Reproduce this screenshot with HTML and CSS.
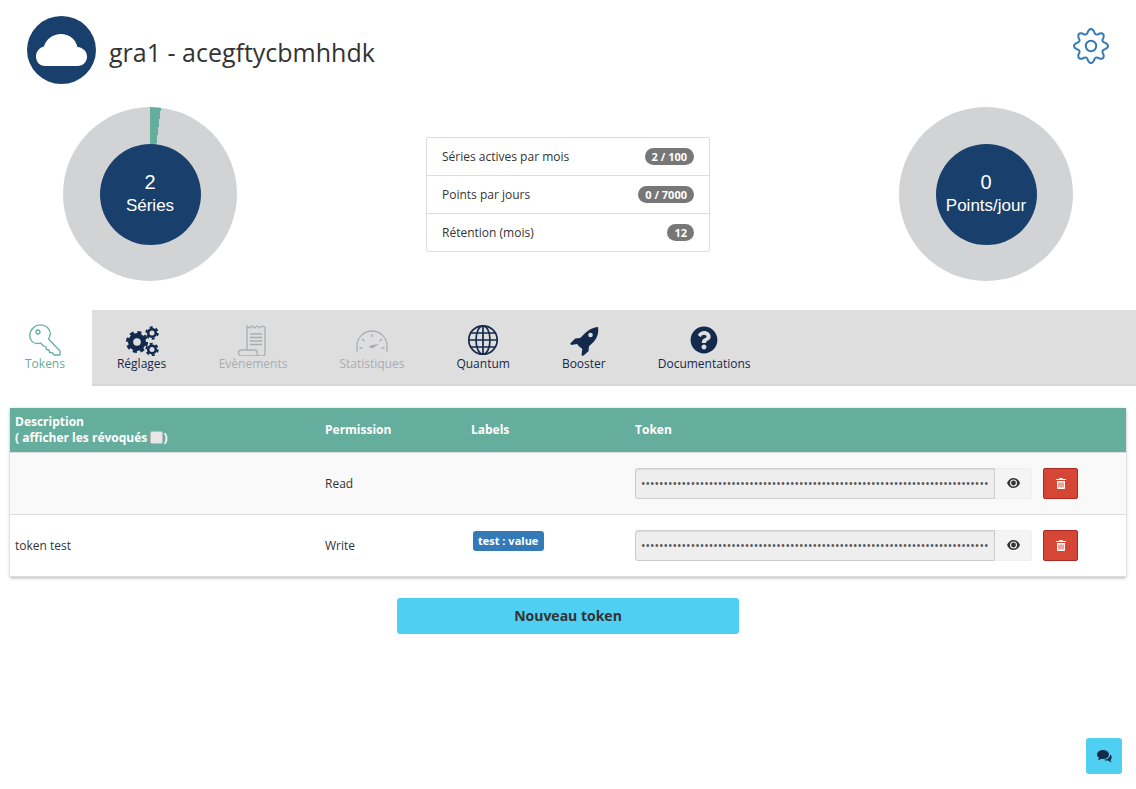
FILE: index.html
```html
<!DOCTYPE html>
<html lang="fr">
<head>
  <meta charset="UTF-8" />
  <meta name="viewport" content="width=device-width, initial-scale=1" />
  <title>gra1 - acegftycbmhhdk</title>
  <link rel="stylesheet" href="styles.css">
</head>
<body>

  <header class="top">
    <div class="avatar">
      <svg width="52" height="33" viewBox="0 0 52 33"><path fill="#fff" d="M9 32C3.500 32 0 27.500 0 22.500 0 17.500 3.500 13.500 8 12.500 10 5 17 0 25 0c8 0 14.500 5 16.500 13 5.500.5 9.500 4.500 9.500 9.500 0 5.500-4 9.500-9.500 9.500z"/></svg>
    </div>
    <h1 class="title">gra1 - acegftycbmhhdk</h1>
    <svg class="gear" width="36" height="36" viewBox="0 0 38 38" fill="none" stroke="#337ab7" stroke-width="2.100"><path d="M34.500 15.920Q39.500 19 34.500 22.080Q29.160 23.210 32.140 27.780Q33.500 33.500 27.780 32.140Q23.210 29.160 22.080 34.500Q19 39.500 15.920 34.500Q14.790 29.160 10.220 32.140Q4.500 33.500 5.860 27.780Q8.840 23.210 3.500 22.080Q-1.500 19 3.500 15.920Q8.840 14.790 5.860 10.220Q4.500 4.500 10.220 5.860Q14.790 8.840 15.920 3.500Q19 -1.500 22.080 3.500Q23.210 8.840 27.780 5.860Q33.500 4.500 32.140 10.220Q29.160 14.790 34.500 15.920Z"/><circle cx="19" cy="19" r="5.500"/></svg>
  </header>

  <section class="stats">
    <div class="donut donut-series">
      <div class="donut-hole"><span class="donut-num">2</span><span class="donut-name">Séries</span></div>
    </div>
    <ul class="quota">
      <li>Séries actives par mois <span class="pill">2 / 100</span></li>
      <li>Points par jours <span class="pill">0 / 7000</span></li>
      <li>Rétention (mois) <span class="pill">12</span></li>
    </ul>
    <div class="donut">
      <div class="donut-hole"><span class="donut-num">0</span><span class="donut-name">Points/jour</span></div>
    </div>
  </section>

  <nav class="tabs">
    <a class="tab tab-active">
      <svg width="32" height="32" viewBox="0 0 32 32" fill="none" stroke="#65ae9d" stroke-width="1.300" stroke-linejoin="round"><path d="M4.500 3.500C8 0 15 0 18.500 3.500 21.500 6.500 22 11 19.500 15L31 27v4h-6l-2-2.500h-2.500L20 26l-2.500-.5L17 23l-2.500-1-3-3c-3.500 1-7.500 0-9.500-3C0 12 1 7 4.500 3.500z"/><circle cx="9" cy="8" r="2"/></svg>
      <span>Tokens</span>
    </a>
    <a class="tab tab-first">
      <svg width="34" height="32" viewBox="0 0 34 32" fill="none" stroke="#142a4d"><circle cx="12" cy="18" r="6.400" stroke-width="5.200"/><circle cx="12" cy="18" r="9.400" stroke-width="3.400" stroke-dasharray="4 3.380"/><circle cx="27" cy="9" r="3.800" stroke-width="2.600"/><circle cx="27" cy="9" r="5.700" stroke-width="2" stroke-dasharray="2.980 2.990"/><circle cx="27" cy="25.500" r="3.800" stroke-width="2.600"/><circle cx="27" cy="25.500" r="5.700" stroke-width="2" stroke-dasharray="2.980 2.990"/></svg>
      <span>Réglages</span>
    </a>
    <a class="tab tab-off">
      <svg width="30" height="32" viewBox="0 0 30 32" fill="none" stroke="#a9adb3" stroke-width="1.300"><path d="M9 26V2l2.500 2L14 2l2.500 2L19 2l2.500 2L24 2l3 1.500v25c0 2-1 3.500-3 3.500H4c-2 0-3.500-1.500-3.500-3.500S2 26 4 26h13c1.500 0 2 1 2 2.500s.5 3.500 3 3.500"/><path d="M12 10h12M12 13.500h12M12 17h12M12 20.500h12"/></svg>
      <span>Evènements</span>
    </a>
    <a class="tab tab-off">
      <svg width="32" height="32" viewBox="0 0 32 32" fill="none" stroke="#a9adb3" stroke-width="1.300"><path d="M1 28v-6a15 15 0 0 1 30 0v6"/><path d="M16 10v3M6 15l2.500 2M26 15l-2.500 2M3.500 24h3M25.500 24h3"/><path fill="#a9adb3" stroke="none" d="M23 20l-5 3.500c-1.500.8-4 .8-4.500-.3s1-2 2.500-2.200z"/></svg>
      <span>Statistiques</span>
    </a>
    <a class="tab">
      <svg width="32" height="32" viewBox="0 0 32 32" fill="none" stroke="#142a4d" stroke-width="1.700"><circle cx="16" cy="16" r="14.200"/><ellipse cx="16" cy="16" rx="7" ry="14.200"/><path d="M16 2v28M2 16h28M4 9h24M4 23h24"/></svg>
      <span>Quantum</span>
    </a>
    <a class="tab">
      <svg width="32" height="32" viewBox="0 0 32 32" fill="#142a4d"><path d="M30 3c1 6-1 12-6 16.500l-3 2.700-.5 5L15 32l-1.500-1 .8-6-3-2.500-2.300-2.500-5.800 1-1-1.500 5-5 5-.5 3-3C20 6 24.500 3.500 30 3z"/><circle cx="22.500" cy="11" r="2.300" fill="#dedede"/></svg>
      <span>Booster</span>
    </a>
    <a class="tab">
      <svg width="32" height="32" viewBox="-40 -40 592 592" fill="#142a4d"><path d="M504 256c0 136.997-111.043 248-248 248S8 392.997 8 256C8 119.083 119.043 8 256 8s248 111.083 248 248zM262.655 90c-54.497 0-89.255 22.957-116.549 63.758-3.536 5.286-2.353 12.415 2.715 16.258l34.699 26.31c5.205 3.947 12.621 3.008 16.665-2.122 17.864-22.658 30.113-35.797 57.303-35.797 20.429 0 45.698 13.148 45.698 32.958 0 14.976-12.363 22.667-32.534 33.976C247.128 238.528 216 254.941 216 296v4c0 6.627 5.373 12 12 12h56c6.627 0 12-5.373 12-12v-1.333c0-28.462 83.186-29.647 83.186-106.667 0-58.002-60.165-102-116.531-102zM256 338c-25.365 0-46 20.635-46 46 0 25.364 20.635 46 46 46s46-20.636 46-46c0-25.365-20.635-46-46-46z"/></svg>
      <span>Documentations</span>
    </a>
  </nav>

  <main class="content">
    <table class="tokens">
      <colgroup>
        <col class="col-desc"><col class="col-perm"><col class="col-labels"><col>
      </colgroup>
      <thead>
        <tr>
          <th>Description<br>( afficher les révoqués <span class="check"></span>)</th>
          <th>Permission</th>
          <th>Labels</th>
          <th>Token</th>
        </tr>
      </thead>
      <tbody>
        <tr>
          <td></td>
          <td>Read</td>
          <td></td>
          <td>
            <div class="token-cell">
              <input class="token-input" type="password" readonly value="xxxxxxxxxxxxxxxxxxxxxxxxxxxxxxxxxxxxxxxxxxxxxxxxxxxxxxxxxxxxxxxxxxxxxxxxxxxxx">
              <button class="eye-btn"><svg width="13" height="10" viewBox="0 0 13 10"><path fill="#333" d="M6.500 0C3.500 0 1.200 2 0 5c1.200 3 3.500 5 6.500 5S11.800 8 13 5C11.800 2 9.500 0 6.500 0zm0 8.500a3.500 3.500 0 1 1 0-7 3.500 3.500 0 0 1 0 7z"/><circle cx="6.500" cy="5" r="2.400" fill="#333"/></svg></button>
              <button class="del-btn"><svg width="10" height="11" viewBox="0 0 10 11"><path fill="#fff" d="M3.500 0h3l.5 1h3v1H0V1h3zM1 3h8v7c0 .6-.4 1-1 1H2c-.6 0-1-.4-1-1zm1.500 1.500V9.500h1v-5zm2 0V9.500h1v-5zm2 0V9.500h1v-5z"/></svg></button>
            </div>
          </td>
        </tr>
        <tr>
          <td>token test</td>
          <td>Write</td>
          <td class="label-cell"><span class="label-tag">test : value</span></td>
          <td>
            <div class="token-cell">
              <input class="token-input" type="password" readonly value="xxxxxxxxxxxxxxxxxxxxxxxxxxxxxxxxxxxxxxxxxxxxxxxxxxxxxxxxxxxxxxxxxxxxxxxxxxxxx">
              <button class="eye-btn"><svg width="13" height="10" viewBox="0 0 13 10"><path fill="#333" d="M6.500 0C3.500 0 1.200 2 0 5c1.200 3 3.500 5 6.500 5S11.800 8 13 5C11.800 2 9.500 0 6.500 0zm0 8.500a3.500 3.500 0 1 1 0-7 3.500 3.500 0 0 1 0 7z"/><circle cx="6.500" cy="5" r="2.400" fill="#333"/></svg></button>
              <button class="del-btn"><svg width="10" height="11" viewBox="0 0 10 11"><path fill="#fff" d="M3.500 0h3l.5 1h3v1H0V1h3zM1 3h8v7c0 .6-.4 1-1 1H2c-.6 0-1-.4-1-1zm1.500 1.500V9.500h1v-5zm2 0V9.500h1v-5zm2 0V9.500h1v-5z"/></svg></button>
            </div>
          </td>
        </tr>
      </tbody>
    </table>

    <button class="new-token">Nouveau token</button>
  </main>

  <button class="chat-btn">
    <svg width="15" height="13" viewBox="0 0 15 13" fill="#142a4d"><ellipse cx="6" cy="4.500" rx="6" ry="4.500"/><path d="M2 7.500 1 10.500l4-2zM13 4.500c1.500 1 2 2.500 1.500 4-.2.6-.6 1-1 1.400l1 2.600-3.500-2c-1.500.2-3 0-4-.8 3.500-.2 6.500-2.300 6-5.200z"/></svg>
  </button>

</body>
</html>
```

FILE: styles.css
```css
* {
  box-sizing: border-box;
}
body {
  margin: 0;
  font-family: "Open Sans", sans-serif;
  font-size: 12px;
  color: #333;
  background: #fff;
}
.top {
  display: flex;
  align-items: center;
  height: 100px;
  padding: 0 27px;
}
.avatar {
  width: 69px;
  height: 68px;
  border-radius: 50%;
  background: #19406c;
  display: flex;
  align-items: center;
  justify-content: center;
  margin-right: 13px;
  flex: none;
}
.title {
  margin: 0;
  padding-top: 4px;
  font-size: 25px;
  font-weight: 400;
  color: #333;
  flex: 1;
}
.gear {
  margin-top: -9px;
}

.stats {
  display: flex;
  justify-content: space-between;
  padding: 7px 63px 0;
  height: 210px;
}
.donut {
  width: 174px;
  height: 174px;
  border-radius: 50%;
  background: #d2d3d5;
  display: flex;
  align-items: center;
  justify-content: center;
}
.donut-series {
  background: conic-gradient(#65ae9d 0 2%, #d2d3d5 2% 100%);
}
.donut-hole {
  width: 101px;
  height: 101px;
  padding-bottom: 1px;
  border-radius: 50%;
  background: #19406c;
  color: #fff;
  font-family: "Liberation Sans", sans-serif;
  display: flex;
  flex-direction: column;
  align-items: center;
  justify-content: center;
}
.donut-num {
  font-size: 20px;
  line-height: 24px;
  margin-bottom: 1px;
}
.donut-name {
  font-size: 17px;
  line-height: 22px;
}
.quota {
  list-style: none;
  margin: 30px 0 0;
  padding: 0;
  width: 284px;
  height: 115px;
  border: 1px solid #ddd;
  border-radius: 2px;
}
.quota li {
  display: flex;
  justify-content: space-between;
  align-items: center;
  height: 38px;
  padding: 0 15px;
  border-bottom: 1px solid #ddd;
}
.quota li:last-child {
  height: 37px;
  border-bottom: none;
}
.pill {
  background: #777;
  color: #fff;
  font-size: 11px;
  font-weight: 700;
  line-height: 11px;
  padding: 3px 7px;
  border-radius: 10px;
}

.tabs {
  display: flex;
  height: 76px;
  background: #dedede;
  border-bottom: 2px solid #d6d6d6;
}
.tab {
  display: flex;
  flex-direction: column;
  align-items: center;
  justify-content: flex-end;
  padding: 0 26px 12px;
  color: #142a4d;
  line-height: 16px;
}
.tab-active {
  background: #fff;
  color: #65ae9d;
  margin-bottom: -2px;
  padding: 0 27px 14px 25px;
}
.tab-first {
  padding-left: 25px;
  padding-right: 26.4px;
}
.tab-off {
  color: #a9adb3;
}

.content {
  padding: 22px 10px 0;
  text-align: center;
}
.tokens {
  width: 1116px;
  border-collapse: collapse;
  table-layout: fixed;
  text-align: left;
  box-shadow: 0 1px 3px rgba(0,0,0,0.3);
}
.col-desc {
  width: 310px;
}
.col-perm {
  width: 146px;
}
.col-labels {
  width: 164px;
}
.tokens th {
  background: #65ae9d;
  color: #fff;
  font-weight: 700;
  height: 44px;
  padding: 0 5px;
  line-height: 16px;
  border-bottom: 1px solid #ddd;
}
.check {
  display: inline-block;
  width: 13px;
  height: 13px;
  background: #e8e8e8;
  border: 1px solid #bbb;
  border-radius: 2px;
  vertical-align: -2px;
}
.tokens td {
  height: 62px;
  padding: 0 5px;
  border-bottom: 1px solid #ddd;
}
.tokens tbody tr:first-child td {
  background: #f9f9f9;
}
.label-cell {
  vertical-align: top;
}
.label-tag {
  display: inline-block;
  margin: 16px 0 0 2px;
  padding: 0 6px 0 5px;
  height: 20px;
  line-height: 20px;
  background: #337ab7;
  color: #fff;
  font-size: 11px;
  font-weight: 700;
  border-radius: 3px;
}
.token-cell {
  display: flex;
  height: 31px;
}
.token-input {
  width: 360px;
  height: 31px;
  padding: 0 5px;
  border: 1px solid #ccc;
  border-radius: 3px 0 0 3px;
  background: #eee;
  color: #555;
  font-family: "Open Sans", sans-serif;
  font-size: 12px;
  box-shadow: inset 0 1px 1px rgba(0,0,0,0.075);
}
.eye-btn {
  width: 37px;
  height: 31px;
  padding: 0;
  border: 1px solid #eee;
  border-left: none;
  border-radius: 0 3px 3px 0;
  background: #f4f4f4;
  display: flex;
  align-items: center;
  justify-content: center;
}
.del-btn {
  width: 35px;
  height: 31px;
  margin-left: 11px;
  padding: 0;
  border: 1px solid #ac2925;
  border-radius: 2px;
  background: #d64635;
  display: flex;
  align-items: center;
  justify-content: center;
}
.new-token {
  display: block;
  width: 342px;
  height: 36px;
  margin: 21px auto 0;
  border: none;
  border-radius: 3px;
  background: #4fd0f3;
  color: #333;
  font-family: "Open Sans", sans-serif;
  font-size: 14px;
  font-weight: 700;
}
.chat-btn {
  position: fixed;
  left: 1086px;
  top: 738px;
  width: 36px;
  height: 36px;
  padding: 0;
  border: none;
  border-radius: 3px;
  background: #4fd0f3;
  display: flex;
  align-items: center;
  justify-content: center;
}
```
